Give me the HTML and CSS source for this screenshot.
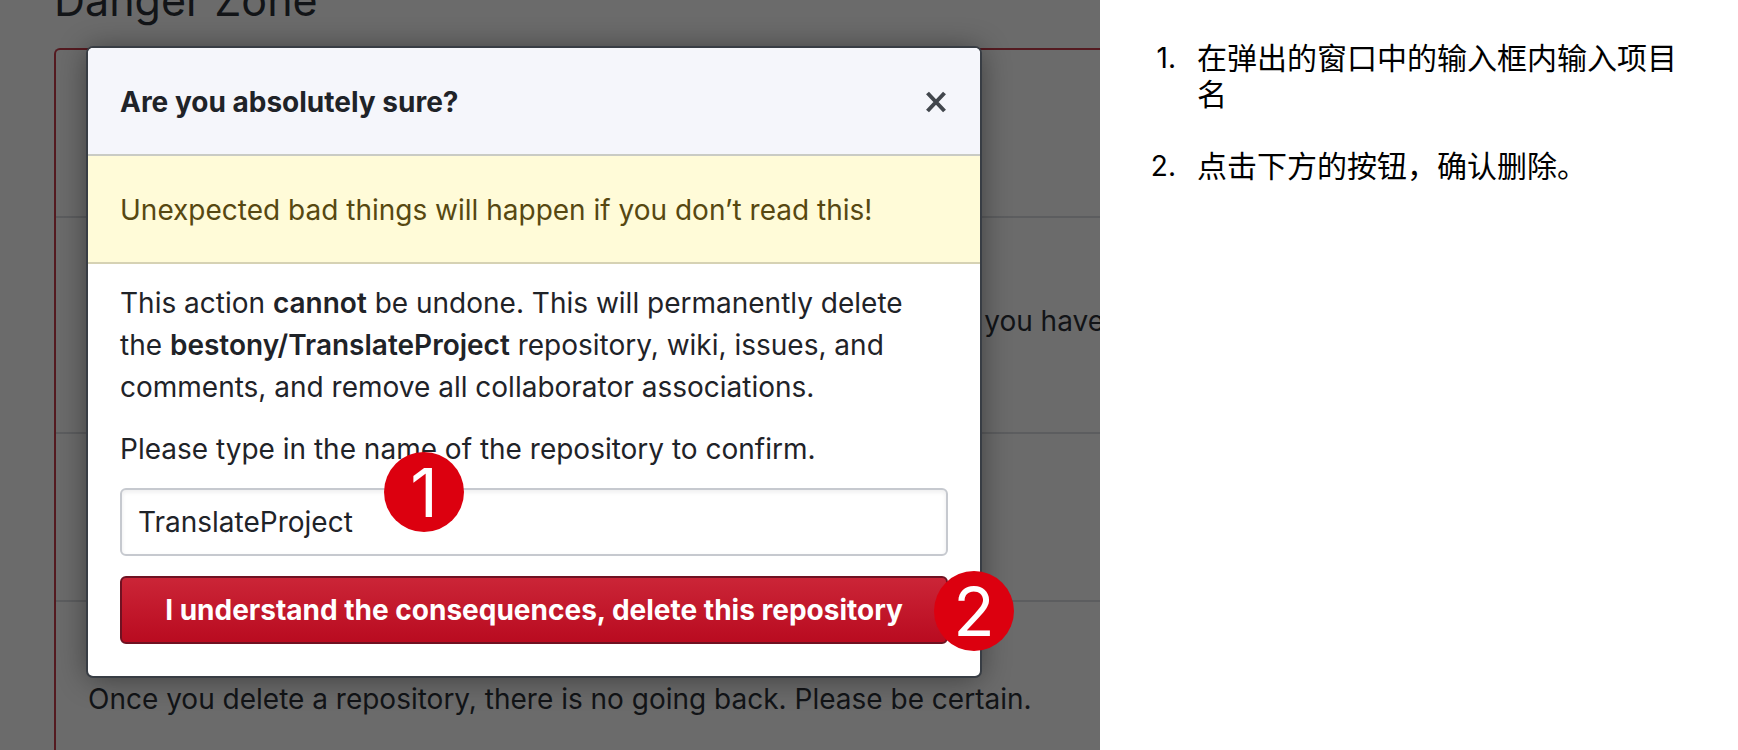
FILE: index.html
```html
<!DOCTYPE html>
<html lang="zh-CN">
<head>
  <meta charset="utf-8">
  <meta name="viewport" content="width=device-width, initial-scale=1">
  <title>Delete repository</title>
  <link rel="stylesheet" href="styles.css">
</head>
<body>
  <main class="slide">
    <section class="settings" lang="en">
      <h2 class="settings-title">Danger Zone</h2>
      <div class="danger-box">
        <div class="danger-row"></div>
        <div class="danger-row danger-row-tall"><p class="danger-tail">you have</p></div>
        <div class="danger-row"></div>
        <div class="danger-row danger-row-last"><p>Once you delete a repository, there is no going back. Please be certain.</p></div>
      </div>

      <dialog class="modal" open aria-labelledby="modal-title">
        <header class="modal-header">
          <h3 class="modal-title" id="modal-title">Are you absolutely sure?</h3>
          <button class="close" type="button" aria-label="Close">
            <svg width="22" height="22" viewBox="0 0 22 22" aria-hidden="true">
              <path d="M1.500 2 18.500 20M18.500 2 1.500 20" stroke="currentColor" stroke-width="4" fill="none"/>
            </svg>
          </button>
        </header>
        <p class="warning">Unexpected bad things will happen if you don’t read this!</p>
        <form class="modal-body">
          <p class="explanation">This action <strong>cannot</strong> be undone. This will permanently delete the <strong>bestony/TranslateProject</strong> repository, wiki, issues, and comments, and remove all collaborator associations.</p>
          <label class="field-label" for="repo-name">Please type in the name of the repository to confirm.</label>
          <div class="field">
            <input class="text-input" id="repo-name" type="text" value="TranslateProject">
            <span class="badge badge-input">1</span>
          </div>
          <div class="field">
            <button class="delete" type="button">I understand the consequences, delete this repository</button>
            <span class="badge badge-button">2</span>
          </div>
        </form>
      </dialog>
    </section>

    <section class="notes">
      <ol class="steps">
        <li>在弹出的窗口中的输入框内输入项目名</li>
        <li>点击下方的按钮，确认删除。</li>
      </ol>
    </section>
  </main>
</body>
</html>
```
FILE: styles.css
```css
* {
  box-sizing: border-box;
}

body {
  margin: 0;
  background: #fff;
  font-family: Inter, "Noto Sans CJK SC", sans-serif;
}

h2, h3, p {
  margin: 0;
}

.slide {
  display: grid;
  grid-template-columns: 1100fr 638fr;
  height: 100vh;
}

.settings {
  position: relative;
  display: flex;
  flex-direction: column;
  overflow: hidden;
  min-width: 0;
  padding-left: 54px;
  background: #6b6b6b;
  color: #121417;
  font-size: 28px;
  line-height: 42px;
}

.settings-title {
  margin-top: -32px;
  margin-bottom: 16px;
  font-size: 43px;
  font-weight: 400;
  line-height: 64px;
}

.danger-box {
  flex: 1;
  border: 2px solid #541a20;
  border-right: 0;
  border-bottom: 0;
  border-radius: 6px 0 0 0;
}

.danger-row {
  height: 168px;
  padding: 32px;
  border-bottom: 2px solid #5c5d5f;
  white-space: nowrap;
}

.danger-row-tall {
  display: flex;
  justify-content: flex-end;
  align-items: center;
  height: 216px;
  padding: 32px 0 40px;
}

.danger-tail {
  margin-right: -4px;
}

.danger-row-last {
  padding-top: 76px;
  border-bottom: 0;
}

.modal {
  position: absolute;
  top: 48px;
  left: 88px;
  right: 120px;
  width: auto;
  margin: 0;
  padding: 0;
  border: 0;
  border-radius: 5px;
  background: #fff;
  color: #1f2328;
  box-shadow: 0 0 0 2px #383d44, 0 2px 30px rgba(0, 0, 0, 0.45);
}

.modal-header {
  display: flex;
  justify-content: space-between;
  align-items: center;
  padding: 33px 32px 31px;
  border-bottom: 2px solid #c9cbc4;
  border-radius: 5px 5px 0 0;
  background: #f5f6fb;
}

.modal-title {
  font-size: 28px;
  font-weight: 700;
}

.close {
  display: flex;
  padding: 0;
  border: 0;
  background: none;
  color: #42474d;
}

.warning {
  padding: 33px 32px 31px;
  border-bottom: 2px solid #d6d2b4;
  background: #fffbd8;
  color: #574811;
}

.modal-body {
  display: flex;
  flex-direction: column;
  padding: 18px 32px 32px;
}

.modal-body strong {
  font-weight: 600;
}

.explanation {
  margin-bottom: 20px;
}

.field-label {
  margin-bottom: 18px;
}

.field {
  position: relative;
}

.field + .field {
  margin-top: 20px;
}

.text-input,
.delete {
  display: block;
  width: 100%;
  height: 68px;
  border-radius: 6px;
  font-family: inherit;
  font-size: 28px;
}

.text-input {
  padding: 0 16px;
  border: 2px solid #c6c9cf;
  background: #fff;
  box-shadow: inset 0 2px 4px rgba(27, 31, 35, 0.08);
  color: #1f2328;
}

.delete {
  padding: 0;
  border: 2px solid #6f1222;
  background: linear-gradient(#cb2537, #b90b20);
  color: #fff;
  font-weight: 700;
  white-space: nowrap;
}

.badge {
  position: absolute;
  display: flex;
  justify-content: center;
  align-items: center;
  width: 80px;
  height: 80px;
  border-radius: 50%;
  background: #dc000f;
  color: #fff;
  font-size: 68px;
  line-height: 80px;
}

.badge-input {
  top: -36px;
  left: 264px;
}

.badge-button {
  top: -5px;
  right: -66px;
}

.notes {
  padding: 40px 48px 40px 40px;
  color: #000;
  font-size: 30px;
  line-height: 36px;
}

.steps {
  display: flex;
  flex-direction: column;
  gap: 36px;
  margin: 0;
  padding: 0;
  list-style: none;
  counter-reset: step;
}

.steps li {
  display: grid;
  grid-template-columns: 36px 1fr;
  gap: 21px;
  counter-increment: step;
}

.steps li::before {
  content: counter(step) ".";
  font-size: 28px;
  text-align: right;
}
```
